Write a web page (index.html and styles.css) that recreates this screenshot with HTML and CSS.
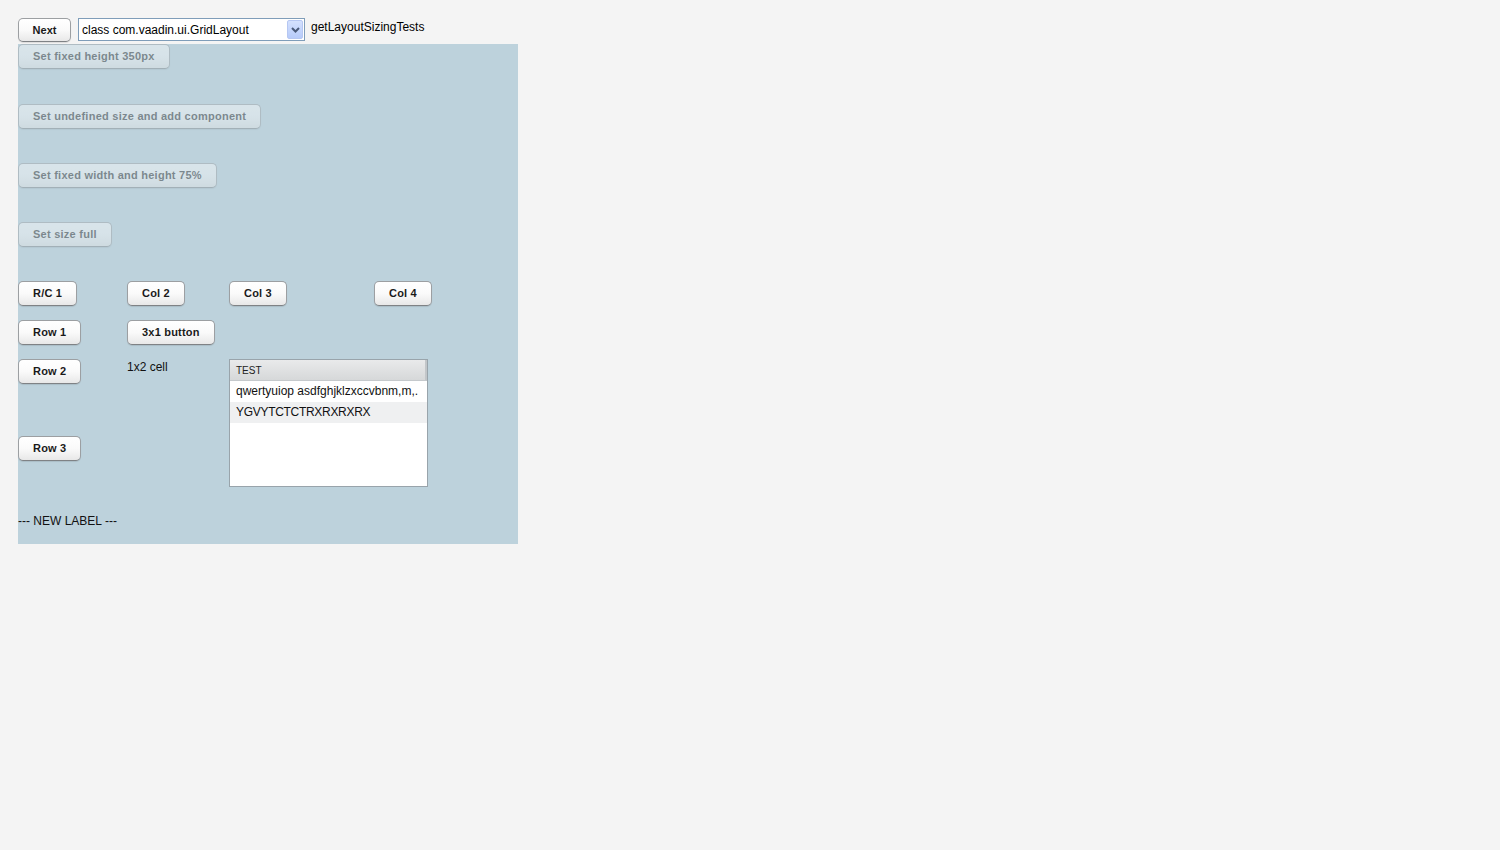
FILE: index.html
```html
<!DOCTYPE html>
<html>
<head>
<meta charset="utf-8">
<link rel="stylesheet" href="styles.css">
</head>
<body>
<div class="toolbar">
  <button class="btn">Next</button>
  <div class="select">
    <span class="select-text">class com.vaadin.ui.GridLayout</span>
    <span class="select-arrow">
      <svg width="9" height="6" viewBox="0 0 9 6"><path d="M1 1 L4.5 4.5 L8 1" fill="none" stroke="#4a5a7a" stroke-width="2"/></svg>
    </span>
  </div>
  <span class="caption">getLayoutSizingTests</span>
</div>
<div class="panel">
  <button class="btn disabled first">Set fixed height 350px</button>
  <button class="btn disabled">Set undefined size and add component</button>
  <button class="btn disabled">Set fixed width and height 75%</button>
  <button class="btn disabled">Set size full</button>
  <div class="grid">
    <button class="btn c1 r1">R/C 1</button>
    <button class="btn c2 r1">Col 2</button>
    <button class="btn c3 r1">Col 3</button>
    <button class="btn c4 r1">Col 4</button>
    <button class="btn c1 r2">Row 1</button>
    <button class="btn c2 r2">3x1 button</button>
    <button class="btn c1 r3">Row 2</button>
    <span class="cell-label c2 r3">1x2 cell</span>
    <div class="table">
      <div class="thead">TEST</div>
      <div class="trow">qwertyuiop asdfghjklzxccvbnm,m,.</div>
      <div class="trow odd">YGVYTCTCTRXRXRXRX</div>
    </div>
    <button class="btn c1 r4">Row 3</button>
  </div>
  <div class="new-label">--- NEW LABEL ---</div>
</div>
</body>
</html>
```
FILE: styles.css
```css
html, body {
  margin: 0;
  padding: 0;
  background: #f4f4f4;
}
body {
  padding: 18px 18px;
  font-family: "Liberation Sans", Arial, sans-serif;
  font-size: 12px;
  color: #222;
}
.toolbar {
  display: flex;
  align-items: flex-start;
  height: 26px;
}
.btn {
  box-sizing: border-box;
  height: 25px;
  padding: 0 14px;
  border: 1px solid #9c9fa2;
  border-bottom-color: #7f8285;
  border-radius: 5px;
  background: linear-gradient(#ffffff 0%, #fafafa 50%, #e8e8e8 100%);
  box-shadow: 0 1px 1px rgba(0,0,0,0.1);
  font-family: "Liberation Sans", Arial, sans-serif;
  font-weight: bold;
  font-size: 11px;
  letter-spacing: 0.2px;
  color: #1a1a1a;
  line-height: 23px;
  white-space: nowrap;
  align-self: flex-start;
  cursor: default;
}
.toolbar .btn {
  height: 24px;
  line-height: 22px;
  letter-spacing: 0;
  width: 53px;
  padding: 0;
}
.btn.disabled {
  opacity: 0.42;
  letter-spacing: 0.25px;
  color: #222;
}
.select {
  box-sizing: border-box;
  margin-left: 7px;
  width: 227px;
  height: 23px;
  border: 1px solid #7f9db9;
  background: #fff;
  display: flex;
  align-items: center;
  justify-content: space-between;
  padding: 0 1px 0 3px;
}
.select-text {
  font-size: 12px;
  color: #000;
}
.select-arrow {
  box-sizing: border-box;
  width: 16px;
  height: 19px;
  border: 1px solid #b6c7f2;
  border-radius: 2px;
  background: linear-gradient(#d4e1fe, #b7cbfa);
  display: flex;
  align-items: center;
  justify-content: center;
}
.caption {
  margin-left: 6px;
  font-size: 12px;
  color: #000;
  line-height: 18px;
}
.panel {
  box-sizing: border-box;
  width: 500px;
  height: 500px;
  background: #bdd2dc;
  display: flex;
  flex-direction: column;
}
.panel > .btn {
  margin-bottom: 34px;
}
.panel > .btn.first {
  margin-bottom: 35px;
}
.grid {
  display: grid;
  grid-template-columns: 109px 102px 145px 144px;
  grid-template-rows: 39px 39px 77px 51px;
  align-items: start;
  justify-items: start;
}
.c1 { grid-column: 1; }
.c2 { grid-column: 2; }
.c3 { grid-column: 3; }
.c4 { grid-column: 4; }
.r1 { grid-row: 1; }
.r2 { grid-row: 2; }
.r3 { grid-row: 3; }
.r4 { grid-row: 4; }
.cell-label {
  grid-row: 3 / span 2;
  font-size: 12px;
  color: #111;
  line-height: 15px;
  margin-top: 1px;
}
.table {
  grid-column: 3 / span 2;
  grid-row: 3 / span 2;
  box-sizing: border-box;
  width: 199px;
  height: 128px;
  border: 1px solid #99a4ab;
  background: #fff;
}
.thead {
  box-sizing: border-box;
  height: 21px;
  padding-left: 6px;
  font-size: 10px;
  line-height: 21px;
  color: #222;
  background: linear-gradient(#e9eaeb, #d6d8d9);
  border-bottom: 1px solid #c5c9cc;
  border-right: 2px solid #c2c6c9;
}
.trow {
  height: 21px;
  padding-left: 6px;
  font-size: 12px;
  line-height: 21px;
  color: #111;
  white-space: nowrap;
  overflow: hidden;
}
.trow.odd {
  background: #eff0f1;
  letter-spacing: -0.3px;
}
.new-label {
  margin-top: 26px;
  font-size: 12px;
  line-height: 17px;
  color: #111;
}
```
